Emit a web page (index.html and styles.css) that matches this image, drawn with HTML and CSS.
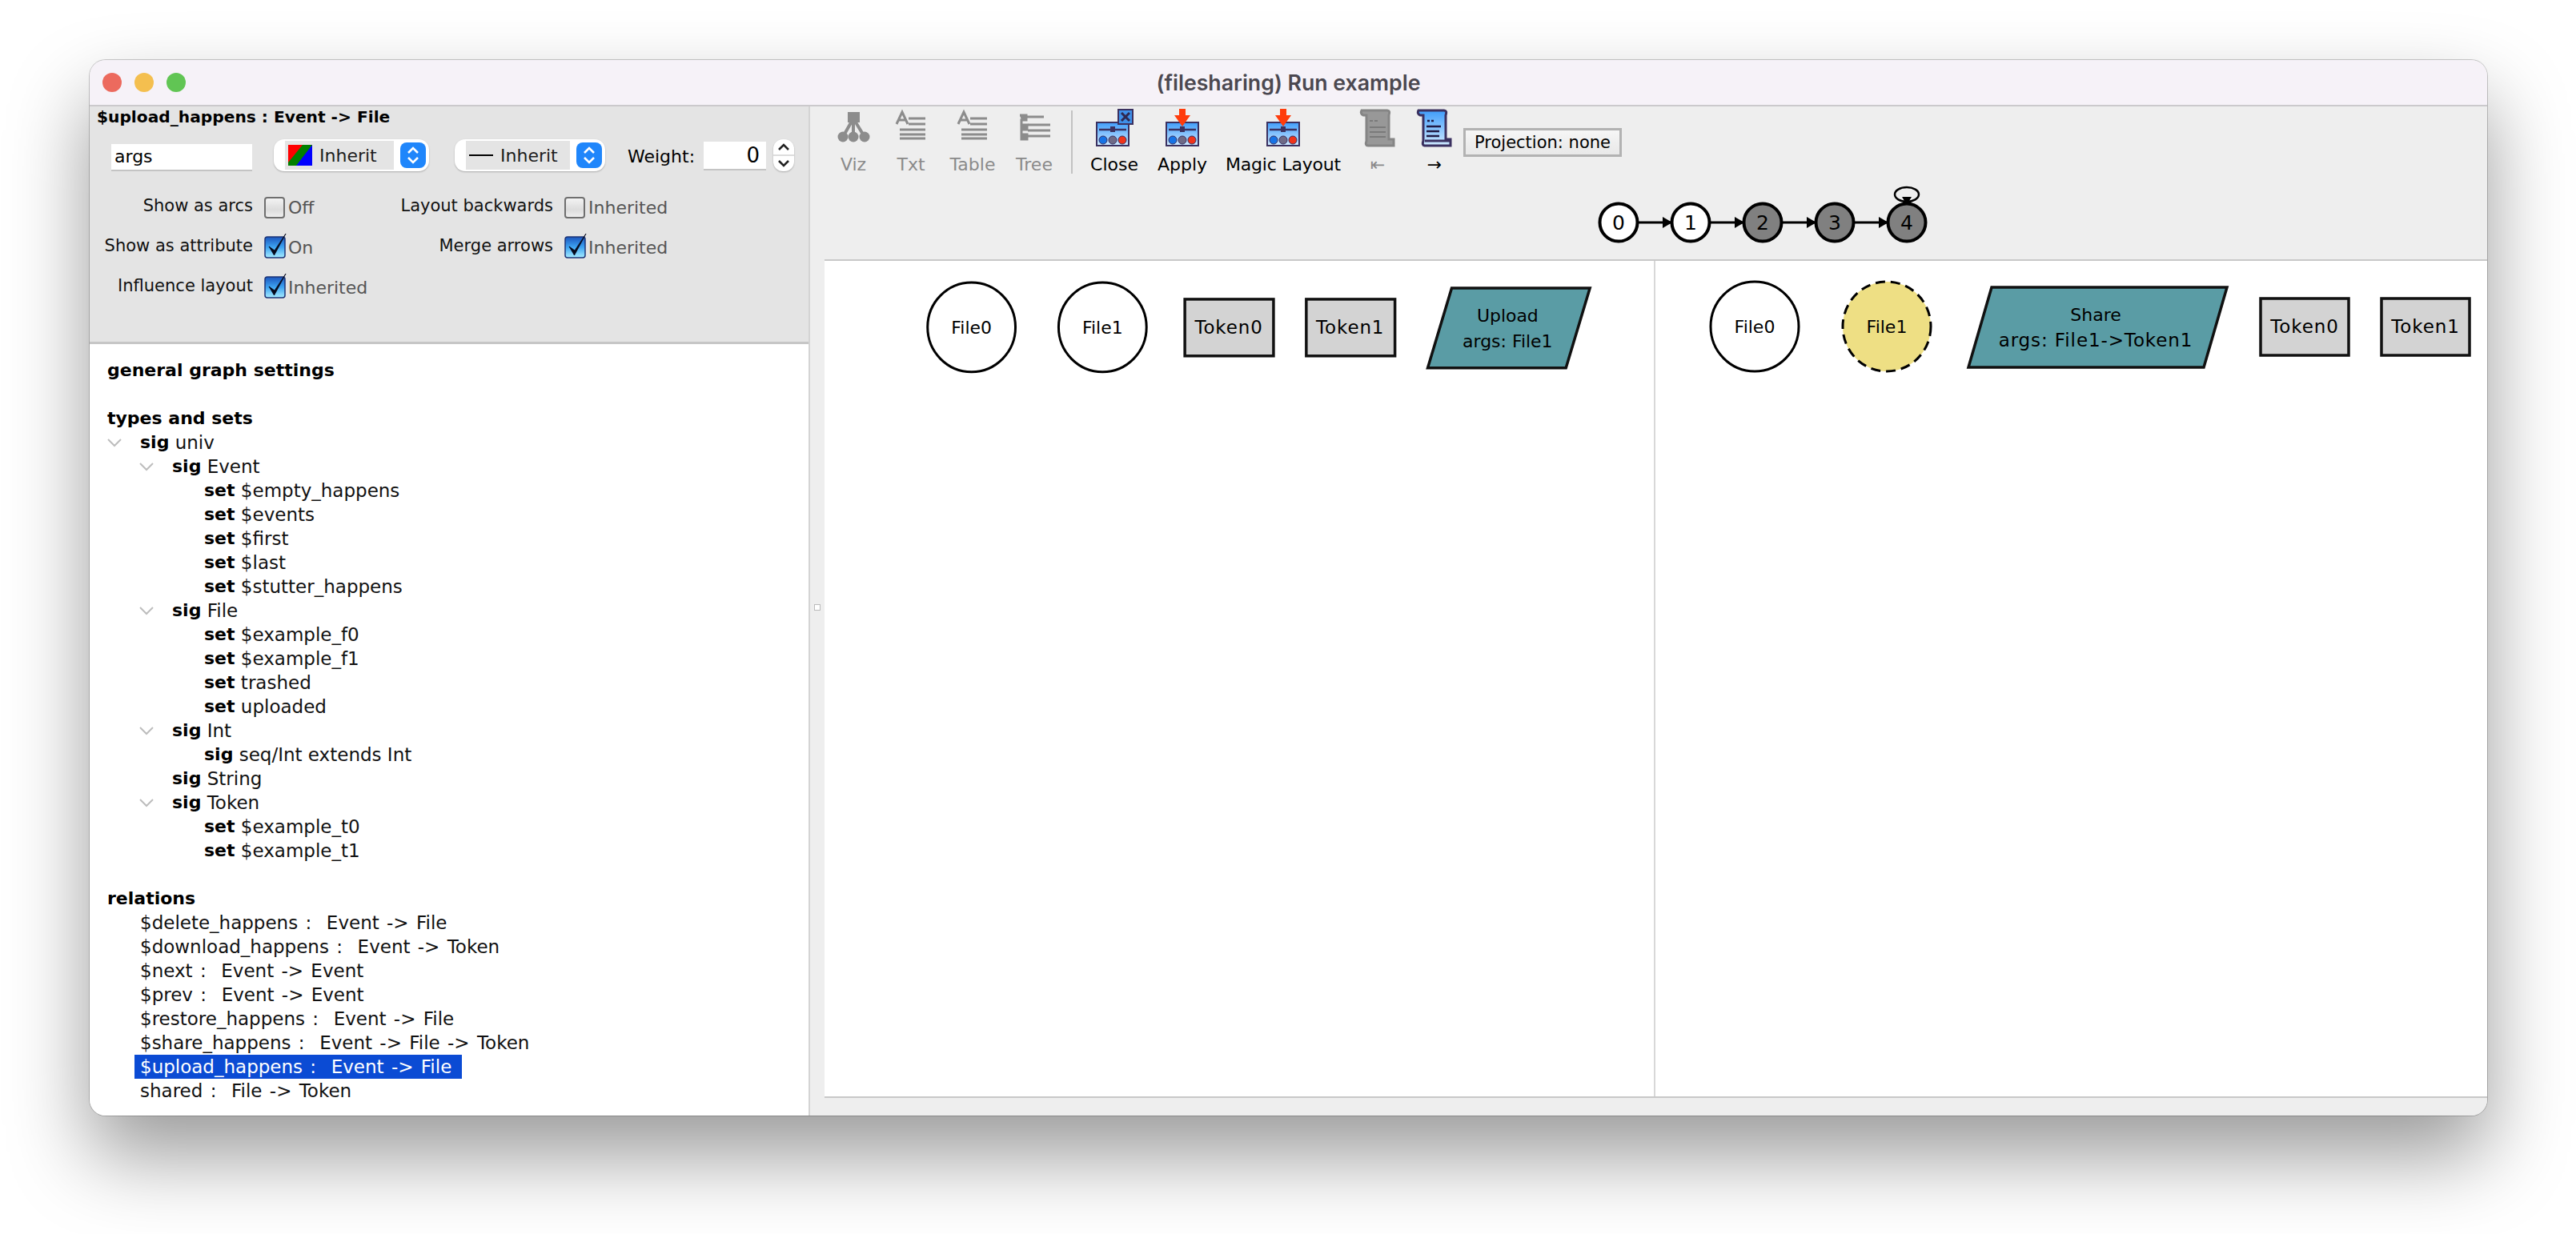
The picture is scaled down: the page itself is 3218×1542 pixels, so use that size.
FILE: index.html

```html
<!DOCTYPE html>
<html lang="en">
<head>
    <meta charset="UTF-8">
    <title>(filesharing) Run example</title>
    <link rel="stylesheet" href="styles.css">
</head>
<body>
    <!-- shared icon parts -->
    <svg class="defs" width="0" height="0">
        <defs>
            <linearGradient id="panelBlue" x1="0" y1="0" x2="0" y2="1">
                <stop offset="0" stop-color="#3f9dfb"/>
                <stop offset="1" stop-color="#cfe9ff"/>
            </linearGradient>
            <linearGradient id="checkBlue" x1="0" y1="0" x2="0" y2="1">
                <stop offset="0" stop-color="#1b55bd"/>
                <stop offset=".5" stop-color="#3ea4f2"/>
                <stop offset="1" stop-color="#a6ecff"/>
            </linearGradient>
            <symbol id="mixer" viewBox="0 0 42 31">
                <rect x="1" y="1" width="40" height="29" fill="url(#panelBlue)" stroke="#3b3160" stroke-width="2"/>
                <path d="M4 10H38" stroke="#3b3160" stroke-width="2.5"/>
                <rect x="18" y="6" width="6" height="7" fill="#3b3160"/>
                <circle cx="9" cy="23" r="5" fill="#1673e6" stroke="#3b3160"/>
                <circle cx="21" cy="23" r="5" fill="#6f6a86" stroke="#3b3160"/>
                <circle cx="33" cy="23" r="5" fill="#f0341a" stroke="#3b3160"/>
            </symbol>
            <symbol id="tick" viewBox="0 0 28 32">
                <rect x="1" y="5" width="25" height="26" rx="3" fill="url(#checkBlue)" stroke="#1c3477" stroke-width="1.5"/>
                <path d="M6 17L12.5 28L27 1L13 22Z" fill="#05091c" stroke="#05091c" stroke-width=".8"/>
            </symbol>
            <symbol id="updown" viewBox="0 0 32 32">
                <rect width="32" height="32" rx="8" fill="#1f86fb"/>
                <path d="M10 13L16 7L22 13M10 19L16 25L22 19" fill="none" stroke="#fff" stroke-width="2.6"/>
            </symbol>
        </defs>
    </svg>

    <div class="window">
        <div class="titlebar">
            <div class="lights">
                <span class="light red"></span>
                <span class="light yellow"></span>
                <span class="light green"></span>
            </div>
            <div class="wintitle">(filesharing) Run example</div>
        </div>

        <div class="content">
            <div class="side">
                <div class="settings">
                    <div class="sel-title">$upload_happens : Event -&gt; File</div>
                    <div class="controls">
                        <div class="text-field">args</div>
                        <div class="combo combo-color">
                            <div class="combo-inner">
                                <svg class="swatch" width="30" height="26" viewBox="0 0 30 26">
                                    <rect width="30" height="26" fill="#00f"/>
                                    <path d="M0 0H30L0 26Z" fill="#f00"/>
                                    <path d="M18 0H30L10 26H0V22Z" fill="#008000"/>
                                </svg>
                                <span>Inherit</span>
                            </div>
                            <svg class="combo-btn" width="32" height="32"><use href="#updown"/></svg>
                        </div>
                        <div class="combo combo-line">
                            <div class="combo-inner">
                                <span class="dash-sample"></span>
                                <span>Inherit</span>
                            </div>
                            <svg class="combo-btn" width="32" height="32"><use href="#updown"/></svg>
                        </div>
                        <div class="weight-label">Weight:</div>
                        <div class="number-field">0</div>
                        <div class="spinner">
                            <svg width="26" height="40" viewBox="0 0 26 40">
                                <path d="M7 13L13 7L19 13M7 27L13 33L19 27" fill="none" stroke="#222" stroke-width="2.6"/>
                                <path d="M0 20H26" stroke="#ddd" stroke-width="2"/>
                            </svg>
                        </div>
                    </div>
                    <div class="checks">
                        <div class="check-label">Show as arcs</div>
                        <div class="check"><span class="box"></span>Off</div>
                        <div class="check-label">Layout backwards</div>
                        <div class="check"><span class="box"></span>Inherited</div>

                        <div class="check-label">Show as attribute</div>
                        <div class="check"><svg class="tick" width="28" height="32"><use href="#tick"/></svg>On</div>
                        <div class="check-label">Merge arrows</div>
                        <div class="check"><svg class="tick" width="28" height="32"><use href="#tick"/></svg>Inherited</div>

                        <div class="check-label">Influence layout</div>
                        <div class="check"><svg class="tick" width="28" height="32"><use href="#tick"/></svg>Inherited</div>
                    </div>
                </div>

                <div class="tree">
                    <div class="row"><b>general graph settings</b></div>
                    <div class="row"></div>
                    <div class="row"><b>types and sets</b></div>
                    <div class="row lv1"><svg class="chev" width="41" height="12" viewBox="0 0 41 12"><path d="M1 2L9 10L17 2"/></svg><b>sig</b>&nbsp;univ</div>
                    <div class="row lv2"><svg class="chev" width="41" height="12" viewBox="0 0 41 12"><path d="M1 2L9 10L17 2"/></svg><b>sig</b>&nbsp;Event</div>
                    <div class="row lv3"><b>set</b>&nbsp;$empty_happens</div>
                    <div class="row lv3"><b>set</b>&nbsp;$events</div>
                    <div class="row lv3"><b>set</b>&nbsp;$first</div>
                    <div class="row lv3"><b>set</b>&nbsp;$last</div>
                    <div class="row lv3"><b>set</b>&nbsp;$stutter_happens</div>
                    <div class="row lv2"><svg class="chev" width="41" height="12" viewBox="0 0 41 12"><path d="M1 2L9 10L17 2"/></svg><b>sig</b>&nbsp;File</div>
                    <div class="row lv3"><b>set</b>&nbsp;$example_f0</div>
                    <div class="row lv3"><b>set</b>&nbsp;$example_f1</div>
                    <div class="row lv3"><b>set</b>&nbsp;trashed</div>
                    <div class="row lv3"><b>set</b>&nbsp;uploaded</div>
                    <div class="row lv2"><svg class="chev" width="41" height="12" viewBox="0 0 41 12"><path d="M1 2L9 10L17 2"/></svg><b>sig</b>&nbsp;Int</div>
                    <div class="row lv3"><b>sig</b>&nbsp;seq/Int extends Int</div>
                    <div class="row lv2"><b>sig</b>&nbsp;String</div>
                    <div class="row lv2"><svg class="chev" width="41" height="12" viewBox="0 0 41 12"><path d="M1 2L9 10L17 2"/></svg><b>sig</b>&nbsp;Token</div>
                    <div class="row lv3"><b>set</b>&nbsp;$example_t0</div>
                    <div class="row lv3"><b>set</b>&nbsp;$example_t1</div>
                    <div class="row"></div>
                    <div class="row"><b>relations</b></div>
                    <div class="row lv1 rel">$delete_happens :&nbsp; Event -&gt; File</div>
                    <div class="row lv1 rel">$download_happens :&nbsp; Event -&gt; Token</div>
                    <div class="row lv1 rel">$next :&nbsp; Event -&gt; Event</div>
                    <div class="row lv1 rel">$prev :&nbsp; Event -&gt; Event</div>
                    <div class="row lv1 rel">$restore_happens :&nbsp; Event -&gt; File</div>
                    <div class="row lv1 rel">$share_happens :&nbsp; Event -&gt; File -&gt; Token</div>
                    <div class="row lv1 rel"><span class="selected">$upload_happens :&nbsp; Event -&gt; File</span></div>
                    <div class="row lv1 rel">shared :&nbsp; File -&gt; Token</div>
                </div>
            </div>

            <div class="splitter"><span class="grip"></span></div>

            <div class="main">
                <div class="toolbar">
                    <div class="tool off">
                        <svg class="icon" width="48" height="48" viewBox="0 0 48 48">
                            <path d="M24 12L11 35M24 12V35M24 12L38 35" stroke="#8c8c8c" stroke-width="4"/>
                            <rect x="17" y="4" width="15" height="13" fill="#8c8c8c"/>
                            <circle cx="11" cy="35" r="6.5" fill="#8c8c8c"/>
                            <circle cx="24" cy="35" r="6.5" fill="#8c8c8c"/>
                            <circle cx="38" cy="35" r="6.5" fill="#8c8c8c"/>
                        </svg>
                        <span>Viz</span>
                    </div>
                    <div class="tool off">
                        <svg class="icon" width="48" height="48" viewBox="0 0 48 48">
                            <path d="M6 19L13 4L20 19M9 14H18" fill="none" stroke="#8c8c8c" stroke-width="3"/>
                            <path d="M21 12H42M21 19H42M10 26H42M10 32H42M10 37H42" stroke="#8c8c8c" stroke-width="3"/>
                        </svg>
                        <span>Txt</span>
                    </div>
                    <div class="tool off">
                        <svg class="icon" width="48" height="48" viewBox="0 0 48 48">
                            <path d="M6 19L13 4L20 19M9 14H18" fill="none" stroke="#8c8c8c" stroke-width="3"/>
                            <path d="M21 12H42M21 19H42M10 26H42M10 32H42M10 37H42" stroke="#8c8c8c" stroke-width="3"/>
                        </svg>
                        <span>Table</span>
                    </div>
                    <div class="tool off">
                        <svg class="icon" width="48" height="48" viewBox="0 0 48 48">
                            <path d="M6 8H14V14H8V20H15V26H8V32H15V38H8V14" fill="#8c8c8c" stroke="#8c8c8c" stroke-width="3"/>
                            <path d="M14 10H36M16 20H44M16 27H44M16 34H44" stroke="#8c8c8c" stroke-width="3"/>
                        </svg>
                        <span>Tree</span>
                    </div>
                    <div class="tool-sep"><span></span></div>
                    <div class="tool">
                        <svg class="icon" width="50" height="48" viewBox="0 0 50 48">
                            <use href="#mixer" x="2" y="16" width="42" height="31"/>
                            <rect x="30" y="1" width="18" height="18" fill="#3f8fe8" stroke="#3b3160" stroke-width="2"/>
                            <path d="M34 5L44 15M44 5L34 15" stroke="#2f2850" stroke-width="3"/>
                        </svg>
                        <span>Close</span>
                    </div>
                    <div class="tool">
                        <svg class="icon" width="48" height="48" viewBox="0 0 48 48">
                            <use href="#mixer" x="3" y="16" width="42" height="31"/>
                            <path d="M20 0H28V8H34L24 22L14 8H20Z" fill="#ff3c0c"/>
                        </svg>
                        <span>Apply</span>
                    </div>
                    <div class="tool">
                        <svg class="icon" width="48" height="48" viewBox="0 0 48 48">
                            <use href="#mixer" x="3" y="16" width="42" height="31"/>
                            <path d="M20 0H28V8H34L24 22L14 8H20Z" fill="#ff3c0c"/>
                        </svg>
                        <span class="tight">Magic Layout</span>
                    </div>
                    <div class="tool off">
                        <svg class="icon" width="48" height="48" viewBox="0 0 48 48">
                            <path d="M4 2H36Q40 2 38 8V38H44V46H12Q8 46 10 40V8H6Q2 6 4 2Z" fill="#989898" stroke="#858585" stroke-width="3"/>
                            <path d="M14 15H18M20 15H24M14 23H34M14 29H34M14 35H34" stroke="#7a7a7a" stroke-width="2"/>
                        </svg>
                        <span>⇤</span>
                    </div>
                    <div class="tool">
                        <svg class="icon" width="48" height="48" viewBox="0 0 48 48">
                            <path d="M4 2H36Q40 2 38 8V38H44V46H12Q8 46 10 40V8H6Q2 6 4 2Z" fill="url(#panelBlue)" stroke="#3b3160" stroke-width="3"/>
                            <path d="M15 15H18M20 15H23M14 22H32M14 28H30M14 34H30" stroke="#211a44" stroke-width="2.4"/>
                            <path d="M12 40H44" stroke="#3b3160" stroke-width="3"/>
                        </svg>
                        <span>→</span>
                    </div>
                    <div class="projection">Projection: none</div>
                </div>

                <div class="timeline">
                    <svg width="430" height="92" viewBox="0 0 430 92">
                        <defs>
                            <marker id="head" markerUnits="userSpaceOnUse" markerWidth="12" markerHeight="14" refX="12" refY="7" orient="auto">
                                <path d="M0 0L12 7L0 14Z" fill="#000"/>
                            </marker>
                        </defs>
                        <path d="M66 46H109" class="edge" marker-end="url(#head)"/>
                        <path d="M156 46H199" class="edge" marker-end="url(#head)"/>
                        <path d="M246 46H289" class="edge" marker-end="url(#head)"/>
                        <path d="M336 46H379" class="edge" marker-end="url(#head)"/>
                        <ellipse cx="402" cy="11" rx="15" ry="9" fill="none" stroke="#000" stroke-width="2.5"/>
                        <path d="M396 14L408 14L402 24Z" fill="#000"/>
                        <circle cx="42" cy="46" r="23.5" class="state"/>
                        <circle cx="132" cy="46" r="23.5" class="state"/>
                        <circle cx="222" cy="46" r="23.5" class="state past"/>
                        <circle cx="312" cy="46" r="23.5" class="state past"/>
                        <circle cx="402" cy="46" r="23.5" class="state past"/>
                        <text x="42" y="55" class="step-text">0</text>
                        <text x="132" y="55" class="step-text">1</text>
                        <text x="222" y="55" class="step-text">2</text>
                        <text x="312" y="55" class="step-text">3</text>
                        <text x="402" y="55" class="step-text">4</text>
                    </svg>
                </div>

                <div class="graphs">
                    <svg class="graph graph-a" width="1038" height="1046" viewBox="0 0 1038 1046">
                        <ellipse cx="184" cy="82" rx="55" ry="56" class="atom"/>
                        <text x="184" y="90" class="node-text">File0</text>
                        <ellipse cx="348" cy="82" rx="55" ry="56" class="atom"/>
                        <text x="348" y="90" class="node-text">File1</text>
                        <rect x="451" y="47" width="111" height="71" class="token"/>
                        <text x="506" y="90" class="node-text wide-text">Token0</text>
                        <rect x="603" y="47" width="111" height="71" class="token"/>
                        <text x="658" y="90" class="node-text wide-text">Token1</text>
                        <path d="M785 33H958L928 133H755Z" class="event"/>
                        <text x="855" y="75" class="node-text">Upload</text>
                        <text x="855" y="107" class="node-text">args: File1</text>
                    </svg>
                    <svg class="graph" width="1038" height="1046" viewBox="0 0 1038 1046">
                        <ellipse cx="124" cy="82" rx="55" ry="56" class="atom"/>
                        <text x="124" y="90" class="node-text">File0</text>
                        <ellipse cx="289" cy="82" rx="55" ry="56" class="atom picked"/>
                        <text x="289" y="90" class="node-text">File1</text>
                        <path d="M420 33H714L685 133H391Z" class="event"/>
                        <text x="550" y="75" class="node-text">Share</text>
                        <text x="550" y="107" class="node-text wide-text">args: File1-&gt;Token1</text>
                        <rect x="756" y="47" width="110" height="71" class="token"/>
                        <text x="811" y="90" class="node-text wide-text">Token0</text>
                        <rect x="907" y="47" width="110" height="71" class="token"/>
                        <text x="962" y="90" class="node-text wide-text">Token1</text>
                    </svg>
                </div>
                <div class="bottom-gutter"></div>
            </div>
        </div>
    </div>
</body>
</html>
```

FILE: styles.css

```css
* {
    box-sizing: border-box;
}
html, body {
    height: 100%;
}
body {
    margin: 0;
    background: #fff;
    overflow: hidden;
    font-family: "DejaVu Sans", sans-serif;
    font-size: 22px;
    color: #000;
}
.defs {
    position: absolute;
}
.window {
    margin: 75px 0 0 112px;
    width: 2995px;
    height: 1319px;
    display: flex;
    flex-direction: column;
    border-radius: 20px;
    overflow: hidden;
    box-shadow: 0 50px 100px rgba(0,0,0,0.4), 0 0 0 1px rgba(0,0,0,0.2);
    background: #eee;
}

/* title bar */
.titlebar {
    height: 58px;
    flex: none;
    display: flex;
    align-items: center;
    background: #f6f2f8;
    border-bottom: 2px solid #cbc9cc;
    position: relative;
}
.lights {
    display: flex;
    gap: 16px;
    margin-left: 16px;
}
.light {
    width: 24px;
    height: 24px;
    border-radius: 50%;
}
.red { background: #ec6a5e; }
.yellow { background: #f4bf4f; }
.green { background: #61c554; }
.wintitle {
    position: absolute;
    left: 0;
    right: 0;
    text-align: center;
    font-family: Inter, sans-serif;
    font-weight: 600;
    font-size: 26.7px;
    color: #4b4850;
}

.content {
    flex: 1;
    display: flex;
    min-height: 0;
}

/* left column */
.side {
    width: 900px;
    flex: none;
    display: flex;
    flex-direction: column;
    border-right: 2px solid #d4d4d4;
}
.settings {
    height: 297px;
    flex: none;
    background: #e4e4e4;
    border-bottom: 3px solid #c6c6c6;
}
.sel-title {
    height: 26px;
    line-height: 26px;
    padding-left: 9px;
    font-weight: bold;
    font-size: 20.2px;
}
.controls {
    display: flex;
    align-items: center;
    height: 44px;
    margin-top: 13px;
    padding-left: 27px;
}
.text-field {
    width: 176px;
    height: 34px;
    line-height: 32px;
    padding-left: 4px;
    margin-top: 6px;
    background: #fff;
    border-bottom: 2px solid #c4c4c4;
}
.combo {
    height: 40px;
    display: flex;
    align-items: center;
    background: #fff;
    border-radius: 13px;
    box-shadow: 0 1px 2px rgba(0,0,0,0.25);
    padding-left: 14px;
}
.combo-color {
    width: 194px;
    margin-left: 27px;
}
.combo-line {
    width: 188px;
    margin-left: 32px;
}
.combo-inner {
    height: 36px;
    width: 136px;
    background: #e4e4e4;
    display: flex;
    align-items: center;
    gap: 9px;
    padding-left: 4px;
    color: #1c1c1c;
}
.combo-line .combo-inner {
    width: 130px;
}
.dash-sample {
    width: 30px;
    height: 2px;
    background: #000;
}
.combo-btn {
    margin-left: 8px;
}
.weight-label {
    margin-left: 28px;
    margin-top: 3px;
    width: 95px;
}
.number-field {
    width: 78px;
    height: 36px;
    line-height: 34px;
    margin-top: 2px;
    padding-right: 8px;
    text-align: right;
    background: #fff;
    border-bottom: 2px solid #c4c4c4;
    font-size: 26px;
}
.spinner {
    margin-left: 9px;
    width: 26px;
    height: 40px;
    background: #fff;
    border-radius: 12px;
    box-shadow: 0 1px 2px rgba(0,0,0,0.25);
}
.spinner svg {
    display: block;
}
.checks {
    display: grid;
    grid-template-columns: 204px 149px 198px auto;
    grid-auto-rows: 50px;
    column-gap: 14px;
    margin-top: 18px;
}
.check-label {
    text-align: right;
    line-height: 46px;
    color: #111;
    font-size: 21px;
}
.check {
    display: flex;
    align-items: center;
    color: #555;
    font-size: 22px;
}
.box {
    width: 26px;
    height: 27px;
    margin: 0 4px 0 0;
    border: 2px solid #6f6f6f;
    border-radius: 4px;
    background: linear-gradient(#f3f3f3, #dcdcdc 60%, #eee);
}
.tick {
    margin: -5px 2px 0 0;
    overflow: visible;
}

/* type tree */
.tree {
    flex: 1;
    background: #fff;
    padding-top: 18px;
}
.row {
    height: 30px;
    line-height: 30px;
    padding-left: 22px;
    display: flex;
    align-items: center;
    white-space: pre;
    color: #111;
    font-size: 23px;
}
.row b {
    color: #000;
    font-size: 22px;
}
.rel {
    word-spacing: 2px;
}
.lv1 { padding-left: 63px; }
.lv2 { padding-left: 103px; }
.lv3 { padding-left: 143px; }
.chev {
    margin-left: -41px;
    flex: none;
}
.chev path {
    fill: none;
    stroke: #bdbdbd;
    stroke-width: 2;
}
.selected {
    background: #0b4bd4;
    color: #fff;
    margin-left: -7px;
    padding: 0 13px 0 7px;
    height: 30px;
}

.splitter {
    width: 18px;
    flex: none;
    background: #eee;
    display: flex;
    align-items: center;
    justify-content: center;
}
.grip {
    width: 8px;
    height: 8px;
    background: #fff;
    border: 1px solid #bbb;
    margin-top: -10px;
}

/* right column */
.main {
    flex: 1;
    min-width: 0;
    display: flex;
    flex-direction: column;
    background: #eee;
}
.toolbar {
    height: 99px;
    flex: none;
    display: grid;
    grid-template-columns: 72px 72px 82px 72px 22px 84px 86px 166px 70px 72px auto;
    padding-top: 3px;
}
.tool {
    display: flex;
    flex-direction: column;
    align-items: center;
    white-space: nowrap;
}
.tool span {
    margin-top: 9px;
    line-height: 26px;
}
.tool .tight {
    letter-spacing: -0.2px;
}
.icon {
    display: block;
    flex: none;
}
.off {
    color: #8a8a8a;
}
.tool-sep {
    display: flex;
    justify-content: center;
    padding-top: 2px;
}
.tool-sep span {
    width: 2px;
    height: 79px;
    margin-top: 0;
    background: #c2c2c2;
}
.projection {
    width: 198px;
    height: 36px;
    margin-top: 24px;
    line-height: 30px;
    text-align: center;
    font-size: 21px;
    background: linear-gradient(#f6f6f6, #e8e8e8);
    border: 3px solid #b2b2b2;
}
.timeline {
    height: 92px;
    flex: none;
    padding-left: 950px;
}
.timeline svg {
    display: block;
    overflow: visible;
}
.edge {
    stroke: #000;
    stroke-width: 3;
    fill: none;
}
.state {
    fill: #fff;
    stroke: #000;
    stroke-width: 4;
}
.past {
    fill: #808080;
}
.step-text {
    font-family: "DejaVu Sans", sans-serif;
    font-size: 25px;
    text-anchor: middle;
    fill: #000;
}
.node-text {
    font-family: "DejaVu Sans", sans-serif;
    font-size: 22px;
    text-anchor: middle;
    fill: #000;
}
.wide-text {
    font-size: 23px;
    letter-spacing: 0.9px;
}
.graphs {
    flex: 1;
    min-height: 0;
    display: flex;
    background: #fff;
    border-top: 2px solid #c8c8c8;
    border-bottom: 2px solid #c8c8c8;
    overflow: hidden;
}
.graph {
    display: block;
    flex: none;
}
.graph-a {
    border-right: 2px solid #d8d8d8;
}
.atom {
    fill: #fff;
    stroke: #000;
    stroke-width: 3;
}
.picked {
    fill: #eedf84;
    stroke-dasharray: 12 7;
}
.token {
    fill: #d3d3d3;
    stroke: #111;
    stroke-width: 3.5;
}
.event {
    fill: #5a9ca5;
    stroke: #111;
    stroke-width: 3.5;
}
.bottom-gutter {
    height: 22px;
    flex: none;
}
```
